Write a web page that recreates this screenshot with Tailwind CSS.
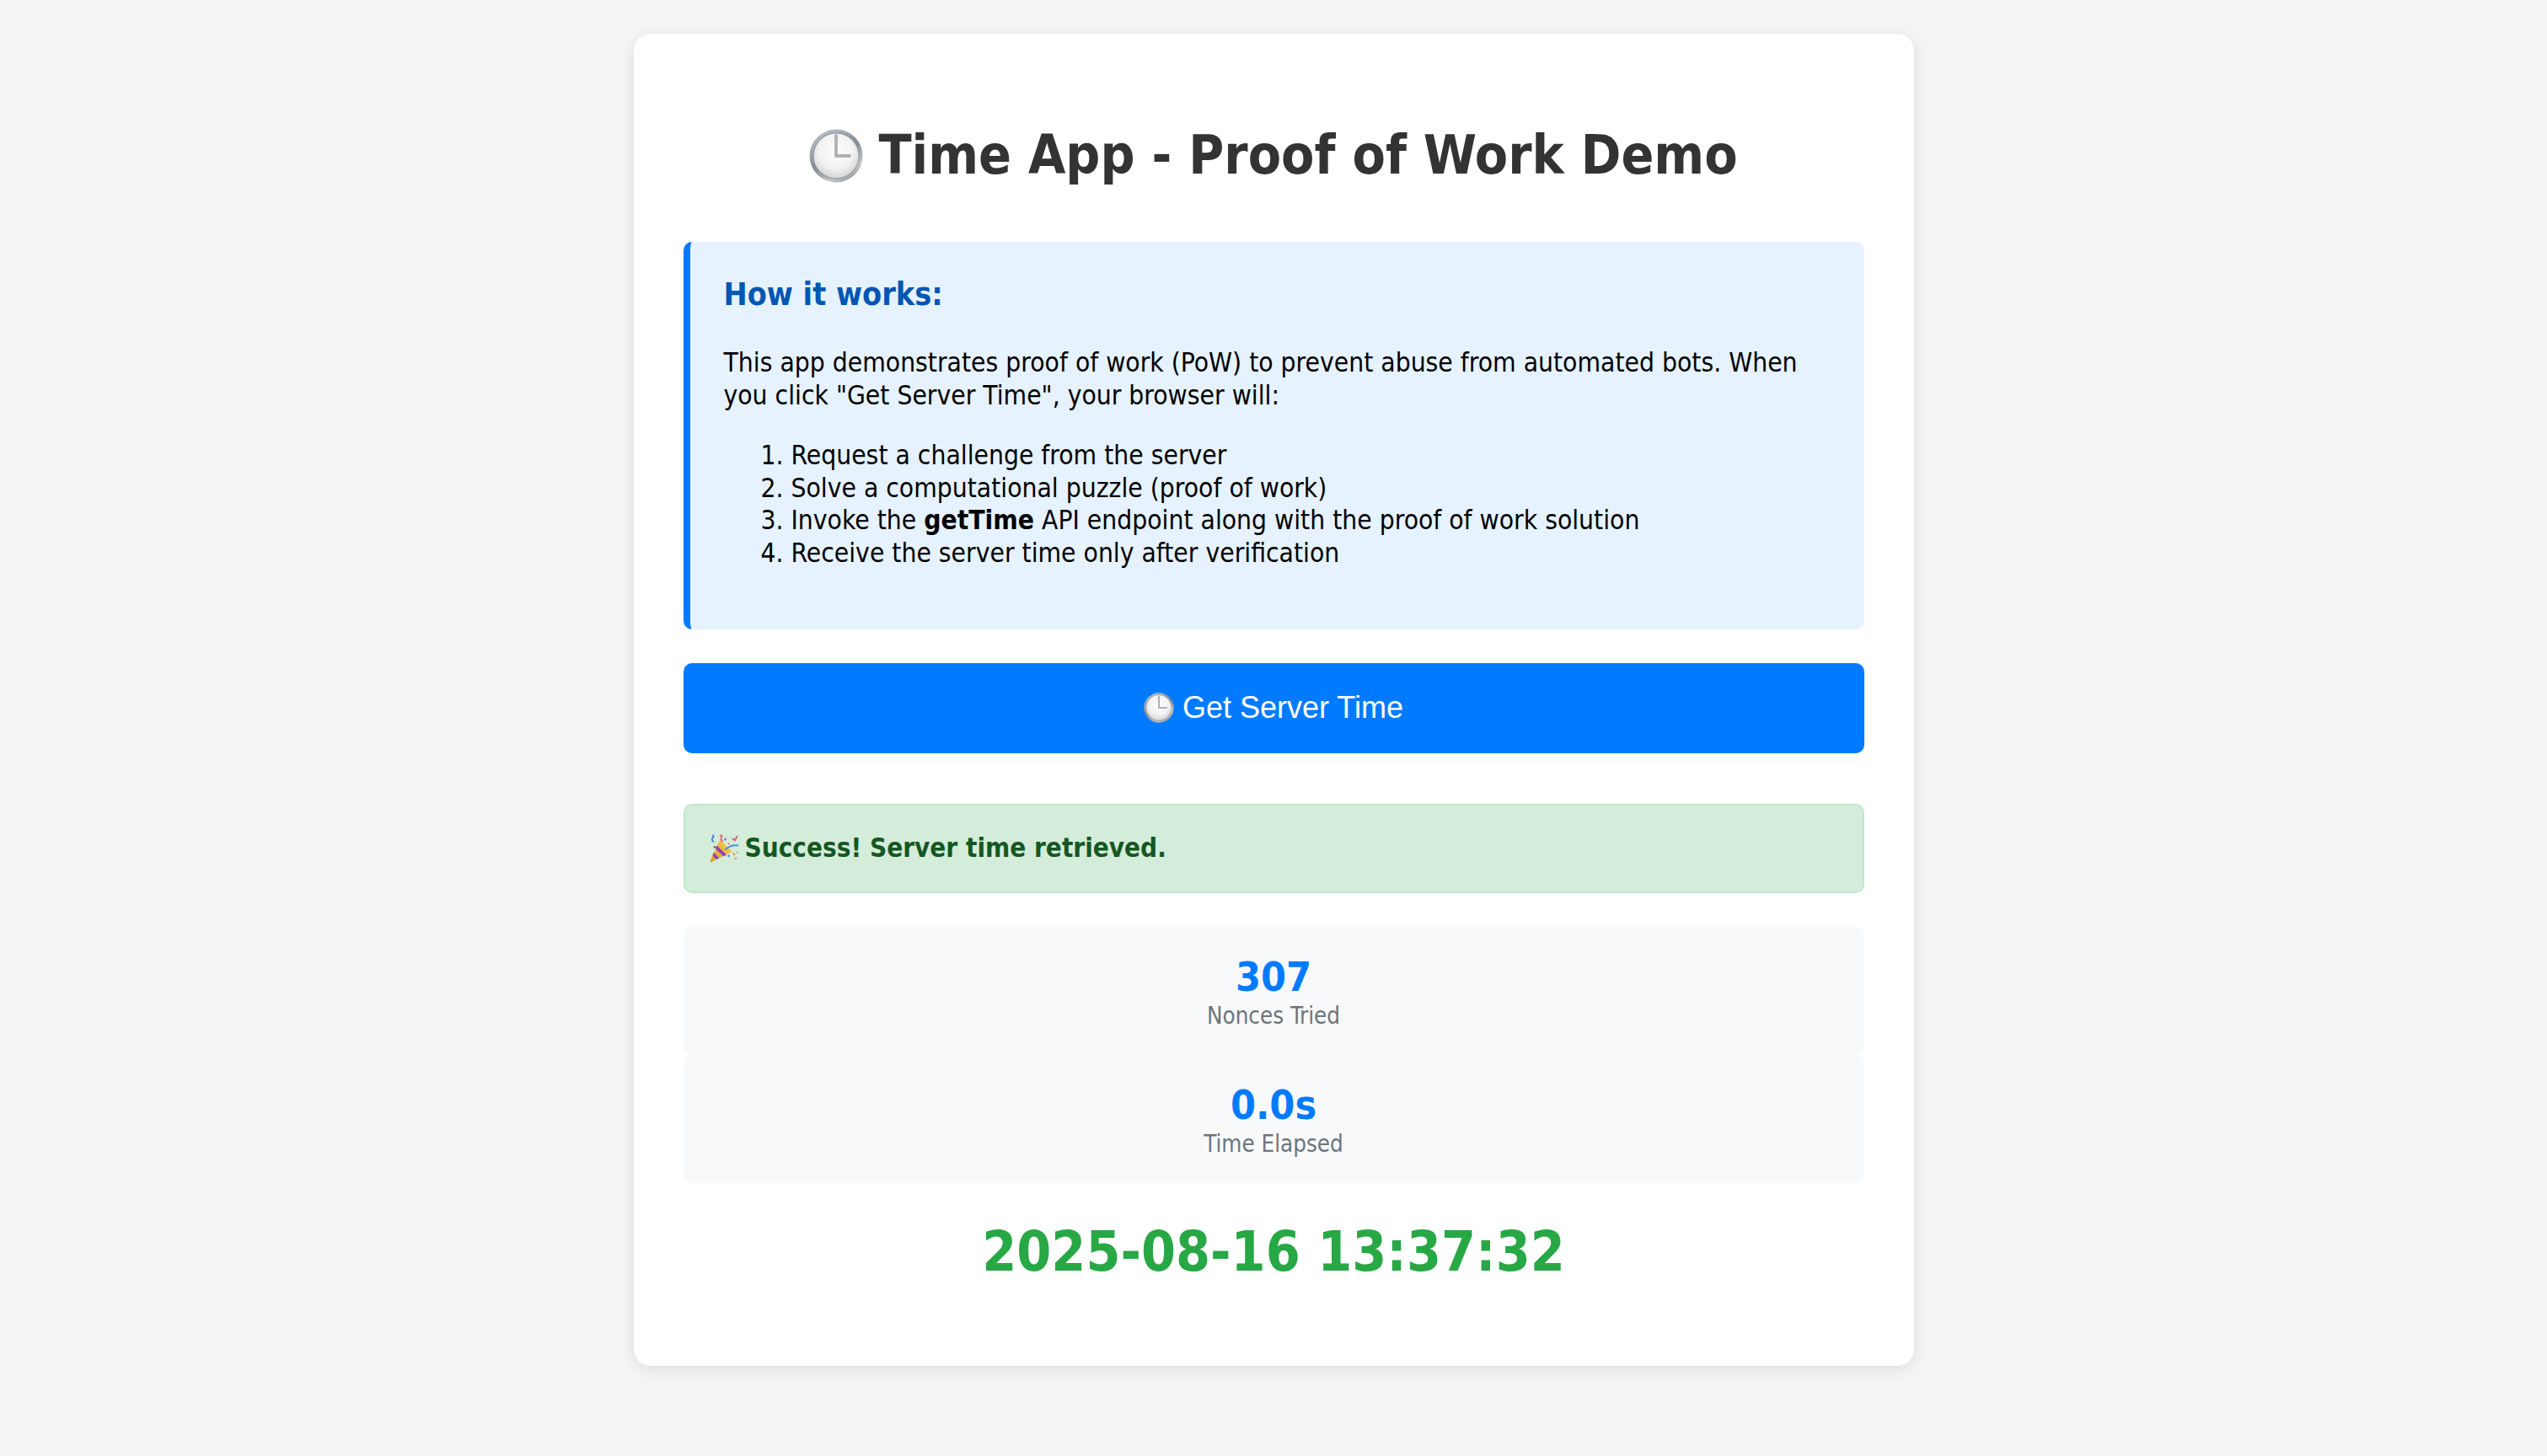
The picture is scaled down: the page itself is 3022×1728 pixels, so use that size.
<!DOCTYPE html>
<html lang="en">

<head>
    <meta charset="UTF-8">
    <title>Time App - Proof of Work Demo</title>
    <script src="https://cdn.jsdelivr.net/npm/@tailwindcss/browser@4"></script>
</head>

<body class="bg-[#f5f5f5] min-h-screen font-['DejaVu_Sans_Condensed','DejaVu_Sans',sans-serif] text-black">
    <!-- shared emoji drawings -->
    <svg class="absolute w-0 h-0">
        <defs>
            <linearGradient id="ring" x1="0.2" y1="0" x2="0.8" y2="1">
                <stop offset="0" stop-color="#b9c4cf" />
                <stop offset="0.5" stop-color="#868c92" />
                <stop offset="0.8" stop-color="#c4c6c8" />
                <stop offset="1" stop-color="#8e9296" />
            </linearGradient>
            <radialGradient id="face" cx="0.5" cy="0.4" r="0.7">
                <stop offset="0" stop-color="#ffffff" />
                <stop offset="0.55" stop-color="#f2f2f2" />
                <stop offset="1" stop-color="#c6c6c6" />
            </radialGradient>
            <linearGradient id="cone" x1="0" y1="1" x2="1" y2="0">
                <stop offset="0" stop-color="#e09a1e" />
                <stop offset="1" stop-color="#f9d35a" />
            </linearGradient>
            <symbol id="clock" viewBox="0 0 64 64">
                <circle cx="32" cy="32" r="31.5" fill="url(#ring)" />
                <circle cx="32" cy="32" r="27.5" fill="#8f9499" />
                <circle cx="32" cy="32" r="26.5" fill="url(#face)" />
                <path d="M32 8V32H48" fill="none" stroke="#aeb2b6" stroke-width="3.8" stroke-linecap="round" stroke-linejoin="round" />
            </symbol>
            <symbol id="popper" viewBox="0 0 32 32">
                <path d="M11 6L25 20L1 32Q0 32 0 30Z" fill="url(#cone)" />
                <path d="M7.5 13L18.5 24L15 25.5L6 17Z M3.5 21L10 27.5L7 29L2.5 25Z" fill="#8f3fc0" />
                <path d="M0 30L2 32L1 32Z" fill="#7b3fa0" />
                <path d="M17 18Q22 12 32 13" fill="none" stroke="#4a90e2" stroke-width="2" />
                <path d="M2 1Q5 3 2 5Q1 7 4 9" fill="none" stroke="#3f7fe0" stroke-width="1.8" />
                <path d="M11 1L13 2L12 6L14 9" fill="none" stroke="#e8698a" stroke-width="2" />
                <path d="M25 5L28 7L31 2" fill="none" stroke="#e0608a" stroke-width="2" />
                <circle cx="17" cy="6" r="1.4" fill="#4a90e2" />
                <circle cx="21" cy="11" r="1.1" fill="#e8698a" />
                <circle cx="5" cy="15" r="1.4" fill="#b05050" />
                <circle cx="27" cy="23" r="1.4" fill="#f0a030" />
                <circle cx="29" cy="28" r="1.4" fill="#f090a8" />
                <circle cx="21" cy="25" r="1.2" fill="#3f7fe0" />
                <circle cx="31" cy="21" r="1.1" fill="#c8b080" />
            </symbol>
        </defs>
    </svg>

    <div class="pt-10 pb-10">
        <div class="w-[1519px] mx-auto bg-white rounded-[20px] shadow-[0_4px_20px_rgba(0,0,0,0.1)] px-[59px] pt-[105px] pb-[92px]">
            <!-- Title -->
            <h1 class="flex justify-center items-center gap-[18px] h-20 text-[63.8px] font-bold text-[#333]">
                <svg class="w-[64px] h-[64px]">
                    <use href="#clock" />
                </svg>
                <span>Time App - Proof of Work Demo</span>
            </h1>

            <!-- Info box -->
            <div class="mt-[62px] bg-[#e6f2ff] border-l-8 border-[#007bff] rounded-[10px] pl-[40px] pr-[32px] pt-[40px] pb-[71px]">
                <h3 class="text-[37.44px] leading-[45px] font-bold text-[#0056b3] mb-[39px]">How it works:</h3>
                <p class="text-[31.5px] leading-[38.6px]">This app demonstrates proof of work (PoW) to prevent abuse from automated bots. When you click "Get Server Time", your browser will:</p>
                <ol class="mt-[33px] pl-[80px] list-decimal text-[31.5px] leading-[38.6px]">
                    <li>Request a challenge from the server</li>
                    <li>Solve a computational puzzle (proof of work)</li>
                    <li>Invoke the <strong class="font-bold">getTime</strong> API endpoint along with the proof of work solution</li>
                    <li>Receive the server time only after verification</li>
                </ol>
            </div>

            <!-- Action -->
            <button class="mt-10 w-full h-[107px] flex justify-center items-center gap-[10px] bg-[#007bff] rounded-[10px] text-white text-[36px] font-['Liberation_Sans',sans-serif]">
                <svg class="w-[36px] h-[36px]">
                    <use href="#clock" />
                </svg>
                <span>Get Server Time</span>
            </button>

            <!-- Success message -->
            <div class="mt-[60px] h-[106px] flex items-center gap-[8px] px-[30px] bg-[#d4edda] border-2 border-[#c3e6cb] rounded-[10px] text-[#155724] text-[31.2px] font-bold">
                <svg class="w-[33px] h-[33px]">
                    <use href="#popper" />
                </svg>
                <span>Success! Server time retrieved.</span>
            </div>

            <!-- Stats -->
            <div class="mt-10">
                <div class="h-[152px] pt-[30px] bg-[#f8f9fa] rounded-[10px] text-center">
                    <div class="text-[48px] leading-[58px] font-bold text-[#007bff]">307</div>
                    <div class="text-[27.5px] leading-[35px] text-[#6c757d]">Nonces Tried</div>
                </div>
                <div class="h-[152px] pt-[30px] bg-[#f8f9fa] rounded-[10px] text-center">
                    <div class="text-[48px] leading-[58px] font-bold text-[#007bff]">0.0s</div>
                    <div class="text-[27.5px] leading-[35px] text-[#6c757d]">Time Elapsed</div>
                </div>
            </div>

            <!-- Server time -->
            <div class="mt-[38px] text-center text-[65.6px] leading-[87px] font-bold text-[#28a745]">2025-08-16 13:37:32</div>
        </div>
    </div>
</body>

</html>
